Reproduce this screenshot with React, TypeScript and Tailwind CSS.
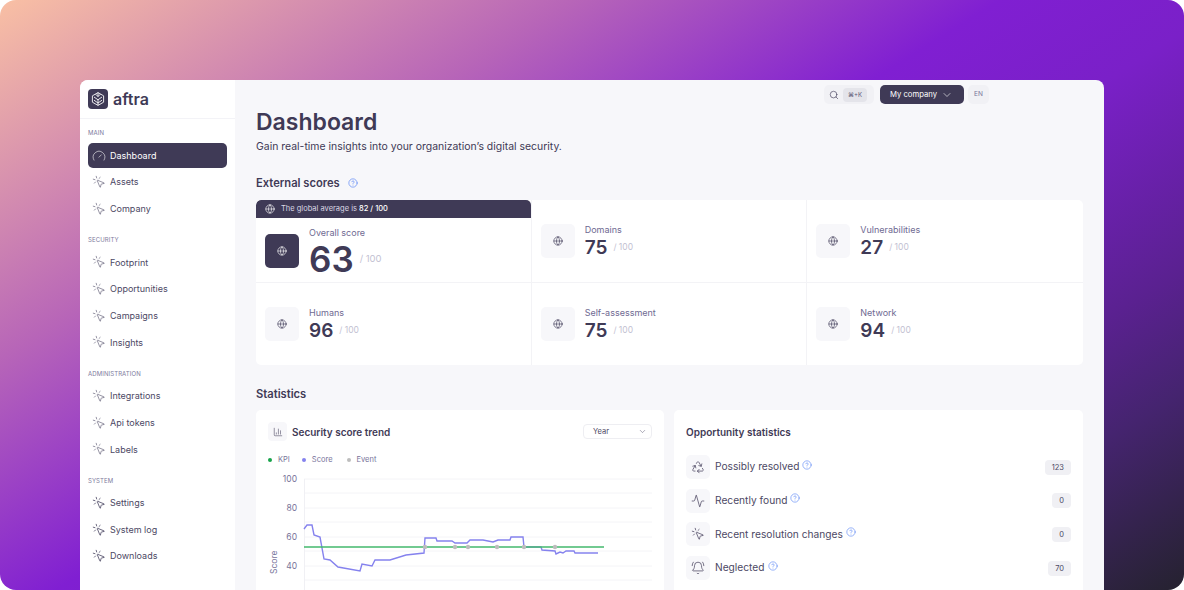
import { ChartColumn, ChevronDown, Gauge, Globe, HelpCircle, MousePointerClick, Activity, BellRing, Recycle, Search } from "lucide-react";

const navGroups = [
  { label: "MAIN", items: ["Dashboard", "Assets", "Company"] },
  { label: "SECURITY", items: ["Footprint", "Opportunities", "Campaigns", "Insights"] },
  { label: "ADMINISTRATION", items: ["Integrations", "Api tokens", "Labels"] },
  { label: "SYSTEM", items: ["Settings", "System log", "Downloads"] },
];

const scores = [
  { title: "Domains", value: 75 },
  { title: "Vulnerabilities", value: 27 },
  { title: "Humans", value: 96 },
  { title: "Self-assessment", value: 75 },
  { title: "Network", value: 94 },
];

const stats = [
  { icon: Recycle, title: "Possibly resolved", count: 123 },
  { icon: Activity, title: "Recently found", count: 0 },
  { icon: MousePointerClick, title: "Recent resolution changes", count: 0 },
  { icon: BellRing, title: "Neglected", count: 70 },
];

function Sidebar() {
  return (
    <aside className="w-[155px] shrink-0 bg-white">
      <div className="flex h-[39px] items-center gap-[5px] border-b border-[#f3f3f7] pl-2">
        <div className="flex h-5 w-5 items-center justify-center rounded-[4px] bg-[#3f3a56]">
          <svg viewBox="0 0 20 20" className="h-4 w-4" fill="none" stroke="white" strokeWidth="1.1" strokeLinejoin="round">
            <path d="M10 2 17 6v8l-7 4-7-4V6Z" />
            <path d="M10 18v-7M10 11 5 7.5M10 11l5-3.5M7 4l3 3 3-3M10 2v5M5 11.5 10 15l5-3.5" />
          </svg>
        </div>
        <span className="text-[16px] leading-none font-semibold text-[#3f3a56]">aftra</span>
      </div>
      <nav className="px-2 pt-[10px]">
        {navGroups.map((group) => (
          <div key={group.label} className="mb-[14.8px]">
            <div className="mb-[7px] h-[7px] text-[6px] leading-[7px] tracking-[0.1px] text-[#7d7a9c]">{group.label}</div>
            {group.items.map((item) => {
              const active = item === "Dashboard";
              const Icon = active ? Gauge : MousePointerClick;
              return (
                <div
                  key={item}
                  className={`mb-[1.6px] flex h-[25px] items-center gap-[4px] rounded-[5px] pl-1 text-[9px] ${
                    active ? "bg-[#3f3a56] text-white" : "text-[#4c4864]"
                  }`}
                >
                  <Icon className="h-[14px] w-[14px]" strokeWidth={group.label === "SYSTEM" ? 1.4 : 1} />
                  <span>{item}</span>
                </div>
              );
            })}
          </div>
        ))}
      </nav>
    </aside>
  );
}

function ScoreCell({ title, value }: { title: string; value: number }) {
  return (
    <div className="flex h-[82px] items-center gap-[10px] pl-[9px]">
      <div className="flex h-[34px] w-[34px] items-center justify-center rounded-[5px] bg-[#f7f7fa]">
        <Globe className="h-[10px] w-[10px] text-[#3f3a56]" strokeWidth={1.5} />
      </div>
      <div className="pt-[2px]">
        <div className="text-[9px] leading-[11px] text-[#6f6a92]">{title}</div>
        <div className="flex items-center gap-[6px]">
          <span className="text-[19px] leading-[25px] font-semibold text-[#3f3a56]">{value}</span>
          <span className="text-[8.5px] text-[#c3c1d2]">/ 100</span>
        </div>
      </div>
    </div>
  );
}

function TrendChart() {
  const score =
    "M304 529 L307 525 L312 525 L314 535 L320 537 L324 559 L330 560 L338 567 L360 571 L362 564 L372 566 L375 560 L390 560 L406 555 L424 553 L425 538 L436 538 L437 541 L452 541 L455 543 L467 543 L470 540 L483 540 L493 542 L498 540 L510 540 L511 537 L523 537 L524 547 L541 547 L542 550 L555 551 L556 554 L560 552 L563 553 L566 551 L574 551 L575 553 L598 553";
  return (
    <svg viewBox="256 470 408 120" className="block h-[120px] w-[408px]">
      {[479, 493, 508, 522, 537, 551, 566, 580].map((y) => (
        <line key={y} x1="304" x2="652" y1={y} y2={y} stroke="#f4f4f7" strokeWidth="1" />
      ))}
      <line x1="304.5" x2="304.5" y1="479" y2="590" stroke="#f0f0f4" strokeWidth="1" />
      <path d={score} fill="none" stroke="#8582ee" strokeWidth="1.4" />
      <line x1="304" x2="604" y1="547" y2="547" stroke="#43b86c" strokeWidth="1.4" />
      {[425, 455, 468, 497, 524, 555].map((x) => (
        <circle key={x} cx={x} cy="547" r="2.2" fill="#bdbdbd" />
      ))}
      {[
        [100, 479],
        [80, 508],
        [60, 537],
        [40, 566],
      ].map(([label, y]) => (
        <text key={label} x="297" y={y + 3} textAnchor="end" fontSize="8.5" fill="#77739a">
          {label}
        </text>
      ))}
      <text x="0" y="0" transform="translate(277 574) rotate(-90)" fontSize="8.5" fill="#77739a">
        Score
      </text>
    </svg>
  );
}

export default function App() {
  return (
    <div className="h-[590px] w-[1184px] overflow-hidden rounded-[16px] bg-[linear-gradient(148deg,#f9c0a4_0%,#b765b8_27%,#801fd2_47%,#7a20c8_58%,#5a2190_76%,#45246f_85%,#25222f_100%)] pt-[80px] pl-[80px] font-['Inter','Liberation_Sans',sans-serif]">
      <div className="flex h-[510px] w-[1024px] overflow-hidden rounded-t-[8px] bg-[#f7f7fa]">
        <Sidebar />
        <main className="min-w-0 flex-1 px-[21px]">
          <div className="flex h-[29px] items-center pl-[568px]">
            <div className="flex h-[19px] w-[50px] items-center gap-[4px] rounded-[5px] bg-[#f1f1f5] pl-[5px]">
              <Search className="h-[10px] w-[10px] text-[#3f3a56]" strokeWidth={1.5} />
              <span className="rounded-[4px] bg-[#e4e4ea] px-[5px] text-[6px] leading-[14px] text-[#5b5775]">⌘+K</span>
            </div>
            <div className="ml-[6px] flex h-[19px] w-[84px] items-center gap-[4px] rounded-[5px] bg-[#3f3a56] pl-[10px] text-[7.7px] text-white">
              My company
              <ChevronDown className="h-[12px] w-[12px]" strokeWidth={1.2} />
            </div>
            <div className="ml-[4px] flex h-[19px] w-[21px] items-center justify-center rounded-[5px] bg-[#f1f1f5] text-[6.5px] text-[#77739a]">
              EN
            </div>
          </div>

          <h1 className="mt-[-1px] text-[23px] leading-[28px] font-semibold text-[#3f3a56]">Dashboard</h1>
          <p className="mt-[3px] text-[10.45px] leading-[16px] text-[#3f3a56]">Gain real-time insights into your organization’s digital security.</p>

          <div className="mt-[20px] flex items-center gap-[8px]">
            <h2 className="text-[11.2px] leading-[16px] font-semibold text-[#3f3a56]">External scores</h2>
            <HelpCircle className="h-[10px] w-[10px] text-[#4f7df5]" strokeWidth={1.5} />
          </div>

          <section className="mt-[9px] grid h-[165px] grid-cols-3 overflow-hidden rounded-[5px] bg-white [&>*]:border-[#f3f3f6]">
            <div className="h-[83px] border-r border-b">
              <div className="flex h-[18px] items-center gap-[6px] rounded-t-[5px] bg-[#3f3a56] pl-[9px] text-[7.5px] text-[#d9d8e4]">
                <Globe className="h-[10px] w-[10px] text-white" strokeWidth={1.5} />
                <span>
                  The global average is <b className="font-medium text-white">82 / 100</b>
                </span>
              </div>
              <div className="flex h-[65px] items-center gap-[10px] pl-[9px]">
                <div className="flex h-[34px] w-[34px] items-center justify-center rounded-[5px] bg-[#3f3a56]">
                  <Globe className="h-[10px] w-[10px] text-white" strokeWidth={1.5} />
                </div>
                <div className="pt-[6px]">
                  <div className="text-[9px] leading-[11px] text-[#6f6a92]">Overall score</div>
                  <div className="flex items-center gap-[6px]">
                    <span className="text-[35px] leading-[42px] font-semibold text-[#3f3a56]">63</span>
                    <span className="text-[9.5px] text-[#c3c1d2]">/ 100</span>
                  </div>
                </div>
              </div>
            </div>
            {scores.map((s, i) => (
              <div key={s.title} className={`${i < 1 ? "border-r border-b" : i === 1 ? "border-b" : i < 4 ? "border-r" : ""}`}>
                <ScoreCell title={s.title} value={s.value} />
              </div>
            ))}
          </section>

          <h2 className="mt-[21px] text-[11.2px] leading-[16px] font-semibold text-[#3f3a56]">Statistics</h2>

          <div className="mt-[8px] grid grid-cols-[408px_1fr] gap-[10px]">
            <section className="h-[200px] rounded-t-[5px] bg-white">
              <div className="flex h-[43px] items-center pr-[12px] pl-[12px]">
                <div className="flex h-[19px] w-[19px] items-center justify-center rounded-[4px] bg-[#f7f7fa]">
                  <ChartColumn className="h-[10px] w-[10px] text-[#3f3a56]" strokeWidth={1.3} />
                </div>
                <span className="ml-[5px] pt-[1px] text-[10px] font-semibold text-[#3f3a56]">Security score trend</span>
                <div className="ml-auto flex h-[15px] w-[69px] items-center justify-between rounded-[4px] border border-[#eeeef2] pr-[4px] pl-[9px] text-[7.5px] text-[#4c4864]">
                  Year
                  <ChevronDown className="h-[9px] w-[9px]" strokeWidth={1.2} />
                </div>
              </div>
              <div className="flex h-[17px] items-center pb-[4px] pl-[12px] text-[7.5px] text-[#77739a]">
                <span className="mr-[6px] h-[4px] w-[4px] rounded-full bg-[#17a34a]" />
                <span className="mr-[12px]">KPI</span>
                <span className="mr-[6px] h-[4px] w-[4px] rounded-full bg-[#8582ee]" />
                <span className="mr-[14px]">Score</span>
                <span className="mr-[6px] h-[4px] w-[4px] rounded-full bg-[#bdbdbd]" />
                <span>Event</span>
              </div>
              <TrendChart />
            </section>

            <section className="h-[200px] rounded-t-[5px] bg-white px-[12px]">
              <h3 className="pt-[15px] text-[10px] leading-[14px] font-semibold text-[#3f3a56]">Opportunity statistics</h3>
              <div className="mt-[16px] flex flex-col gap-[9.7px]">
                {stats.map((stat) => {
                  const Icon = stat.icon;
                  return (
                    <div key={stat.title} className="flex h-6 items-center">
                      <div className="flex h-6 w-6 items-center justify-center rounded-[5px] bg-[#f7f7fa]">
                        <Icon className="h-[14px] w-[14px] text-[#3f3a56]" strokeWidth={1.2} />
                      </div>
                      <span className="ml-[5px] text-[10.2px] text-[#4c4864]">{stat.title}</span>
                      <HelpCircle className="mb-[5px] ml-[3px] h-[10px] w-[10px] text-[#4f7df5]" strokeWidth={1.4} />
                      <span className="ml-auto rounded-[4px] bg-[#f0f0f4] px-[7px] text-[7.5px] leading-[15px] text-[#4c4864]">{stat.count}</span>
                    </div>
                  );
                })}
              </div>
            </section>
          </div>
        </main>
      </div>
    </div>
  );
}
